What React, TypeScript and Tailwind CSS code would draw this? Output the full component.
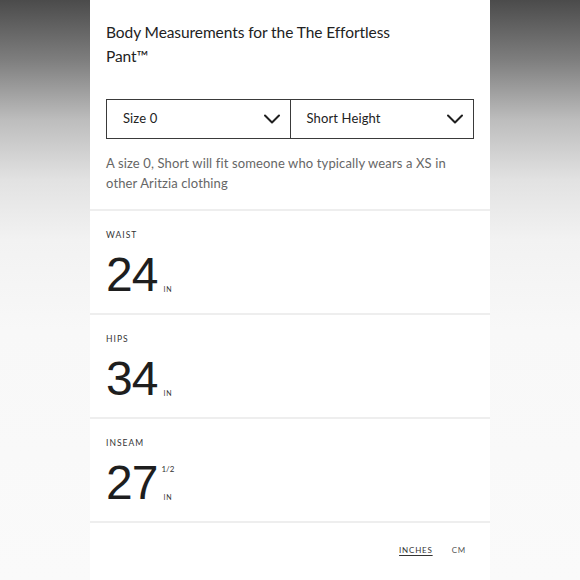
type Measurement = {
  label: string
  value: string
  fraction?: string
}

const measurements: Measurement[] = [
  { label: 'Waist', value: '24' },
  { label: 'Hips', value: '34' },
  { label: 'Inseam', value: '27', fraction: '1/2' },
]

function Chevron() {
  return (
    <svg width="16" height="10" viewBox="0 0 16 10" fill="none">
      <path
        d="M1 1.5L8 8.5L15 1.5"
        stroke="#1f1f1f"
        strokeWidth="2"
        strokeLinecap="round"
        strokeLinejoin="round"
      />
    </svg>
  )
}

function SelectBox({ label, last }: { label: string; last?: boolean }) {
  return (
    <div
      className={`flex flex-1 items-center justify-between h-full pl-4 pr-[10px] ${
        last ? '' : 'border-r border-[#3a3a3a]'
      }`}
    >
      <span className="text-[13px] text-[#222] tracking-[0.01em]">{label}</span>
      <Chevron />
    </div>
  )
}

function MeasurementRow({ m }: { m: Measurement }) {
  return (
    <div className="px-4 pt-[18px] pb-[14px]">
      <div className="text-[8.5px] leading-[12px] uppercase tracking-[0.12em] text-[#333]">
        {m.label}
      </div>
      <div className="mt-[10px] flex items-end h-[48px]">
        <span className="font-['Liberation_Sans',Arial,sans-serif] text-[48px] leading-[48px] text-[#1e1e1e] tracking-[-0.02em]">
          {m.value}
        </span>
        {m.fraction ? (
          <div className="ml-[4px] flex flex-col items-center justify-between h-[48px] pt-[6px] pb-[6px]">
            <span className="text-[8px] leading-[8px] text-[#333]">{m.fraction}</span>
            <span className="text-[7px] leading-[8px] tracking-[0.1em] text-[#333]">IN</span>
          </div>
        ) : (
          <span className="ml-[6px] mb-[6px] text-[7px] leading-[8px] tracking-[0.1em] text-[#333]">
            IN
          </span>
        )}
      </div>
    </div>
  )
}

export default function App() {
  return (
    <div className="min-h-[580px] w-full flex justify-center bg-[linear-gradient(to_bottom,#4b4b4b_0px,#7e7e7e_60px,#bdbdbd_120px,#e2e2e2_180px,#f2f2f2_240px,#f8f8f8_330px,#fafafa_580px)] font-['Lato','Noto_Sans',sans-serif]">
      <div className="w-[400px] bg-white flex flex-col">
        <div className="px-4 pt-[20px] pb-[16px]">
          <h1 className="max-w-[300px] text-[15.5px] leading-[24px] text-[#222] font-normal tracking-[-0.005em]">
            Body Measurements for the The Effortless Pant™
          </h1>
          <div className="mt-[31px] flex h-[40px] border border-[#3a3a3a]">
            <SelectBox label="Size 0" />
            <SelectBox label="Short Height" last />
          </div>
          <p className="mt-[14px] max-w-[345px] text-[13px] leading-[20px] text-[#666] tracking-[0.01em]">
            A size 0, Short will fit someone who typically wears a XS in other Aritzia clothing
          </p>
        </div>
        {measurements.map((m) => (
          <div key={m.label}>
            <div className="h-[2px] bg-[#eeeeee]" />
            <MeasurementRow m={m} />
          </div>
        ))}
        <div className="h-[2px] bg-[#eeeeee]" />
        <div className="flex justify-end gap-[19px] pr-[24px] pt-[21px] text-[8px] tracking-[0.1em]">
          <span className="text-[#333] underline underline-offset-2">INCHES</span>
          <span className="text-[#555]">CM</span>
        </div>
      </div>
    </div>
  )
}
